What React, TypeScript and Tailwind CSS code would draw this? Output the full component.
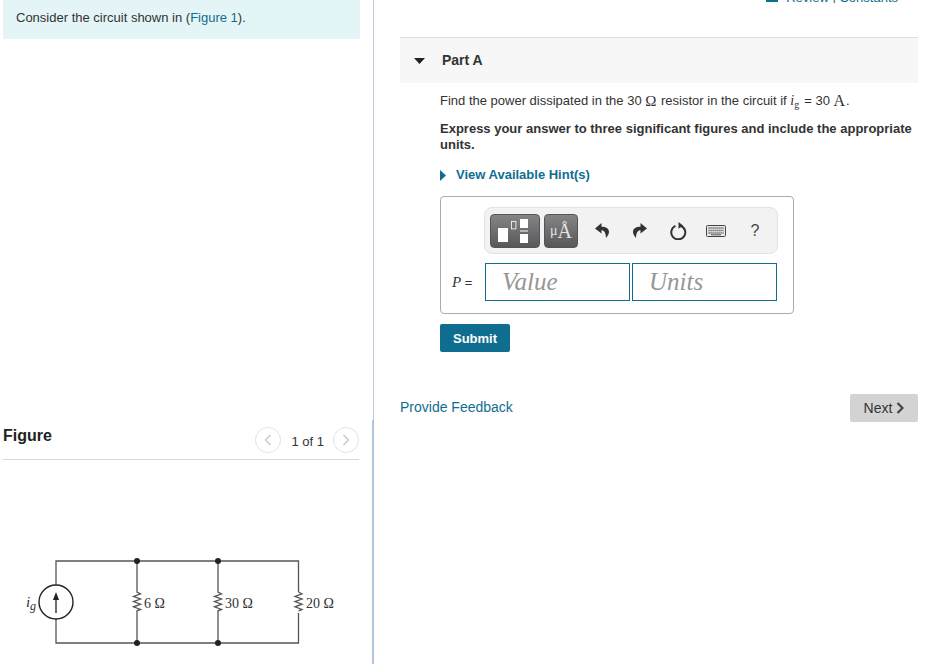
const sans = { fontFamily: '"Liberation Sans", Arial, sans-serif' };

function CircuitFigure() {
  const zig = (x: number) =>
    `M${x} 561V592l3.5 1.8-7 2.6 7 2.6-7 2.6 7 2.6-7 2.6 7 2.6-3.5 1.4V643`;
  return (
    <svg width="357" height="124" viewBox="3 540 357 124" className="block">
      <g fill="none" stroke="#555" strokeWidth="1.3">
        <path d="M56 585V561H298.5V592" />
        <path d="M56 619V643H298.5V613" />
        <path d={zig(137)} />
        <path d={zig(218)} />
        <path d="M298.5 592l3.5 1.8-7 2.6 7 2.6-7 2.6 7 2.6-7 2.6 7 2.6-3.5 1.4" />
        <circle cx="56" cy="602" r="17" stroke="#222" strokeWidth="1.4" />
        <path d="M56 613V597" stroke="#222" />
      </g>
      <path d="M56 592l-3 8h6z" fill="#222" />
      <g fill="#222">
        <circle cx="137" cy="561" r="3" />
        <circle cx="218" cy="561" r="3" />
        <circle cx="137" cy="643" r="3" />
        <circle cx="218" cy="643" r="3" />
      </g>
      <g fill="#333" fontSize="14" fontFamily='"Liberation Serif", serif'>
        <text x="26" y="607" fontStyle="italic" fontSize="15">i</text>
        <text x="30" y="610" fontStyle="italic" fontSize="12">g</text>
        <text x="144" y="608">6 Ω</text>
        <text x="225" y="608">30 Ω</text>
        <text x="306" y="608">20 Ω</text>
      </g>
    </svg>
  );
}

function PagerButton({ dir }: { dir: "left" | "right" }) {
  return (
    <span className="flex h-[26px] w-[26px] items-center justify-center rounded-full border border-[#e3e3e3] bg-white">
      <svg width="10" height="12" viewBox="0 0 10 12" fill="none" stroke="#c4c4c4" strokeWidth="1.2">
        <path d={dir === "left" ? "M7.500 1L2.500 6l5 5" : "M2.500 1l5 5-5 5"} />
      </svg>
    </span>
  );
}

function ToolIcon({ children }: { children: React.ReactNode }) {
  return <span className="flex h-[34px] w-[38px] items-center justify-center">{children}</span>;
}

function Toolbar() {
  return (
    <div className="ml-[43px] flex h-[47px] w-[294px] items-center rounded-[8px] border border-[#e2e2e2] bg-[#f2f2f2] pl-[5px]">
      <span className="flex h-[34px] w-[50px] items-center justify-center rounded-[4px] border border-[#555] bg-gradient-to-b from-[#858588] to-[#58585b] pr-[4px]">
        <svg width="30" height="24" viewBox="0 0 30 24" fill="#fff">
          <rect x="0" y="9" width="10" height="14" />
          <rect x="13.400" y="2.400" width="4.500" height="7.500" fill="none" stroke="#fff" strokeWidth="0.8" />
          <rect x="22" y="0" width="8" height="9" />
          <rect x="22" y="11.500" width="8" height="1" />
          <rect x="22" y="15" width="8" height="9" />
        </svg>
      </span>
      <span
        className="ml-[4px] flex h-[34px] w-[34px] items-center justify-center rounded-[4px] border border-[#555] bg-gradient-to-b from-[#858588] to-[#58585b] leading-none text-[#e4e4e4]"
        style={{ fontFamily: '"Liberation Serif", serif' }}
      >
        <span className="text-[14px]">μ</span>
        <span className="text-[20px]">Å</span>
      </span>
      <span className="ml-[5px] flex">
        <ToolIcon>
          <svg width="14" height="15" viewBox="0 0 14 15" fill="#333">
            <path d="M6.500 0L0 5.500 6.500 10.500V7.300C9 7.300 10.800 9.500 11 15 13 12.800 14 11 14 8.800 14 5.500 11 3.700 6.500 3.700z" />
          </svg>
        </ToolIcon>
        <ToolIcon>
          <svg width="14" height="15" viewBox="0 0 14 15" fill="#333">
            <path d="M7.500 0L14 5.500 7.500 10.500V7.300C5 7.300 3.200 9.500 3 15 1 12.800 0 11 0 8.800 0 5.500 3 3.700 7.500 3.700z" />
          </svg>
        </ToolIcon>
        <ToolIcon>
          <svg width="17" height="18" viewBox="0 0 17 18" fill="none" stroke="#333" strokeWidth="2">
            <path d="M10.500 3.700A7 7 0 1 1 5.500 3.900" />
            <path d="M8.500 0l4.500 3.500-4.500 3.200z" fill="#333" stroke="none" />
          </svg>
        </ToolIcon>
        <ToolIcon>
          <svg width="20" height="12" viewBox="0 0 20 12" fill="none">
            <rect x="0.500" y="0.500" width="19" height="11" rx="1" fill="#e8e8e8" stroke="#444" />
            <path d="M2.500 3h15M2.500 5.500h15" stroke="#555" strokeWidth="1.300" strokeDasharray="1.200 0.800" />
            <path d="M2.500 8h15" stroke="#555" strokeWidth="1.300" strokeDasharray="1.200 0.800" />
            <path d="M5 9.800h10" stroke="#555" />
          </svg>
        </ToolIcon>
        <span className="flex h-[34px] w-[40px] items-center justify-center text-[16px] text-[#444]" style={sans}>
          ?
        </span>
      </span>
    </div>
  );
}

function AnswerInput({ label }: { label: string }) {
  return (
    <div
      className="flex h-[38px] w-[145px] items-center border border-[#0f6e8f] bg-white pl-[16px] text-[25px] italic text-[#969696]"
      style={{ fontFamily: '"Liberation Serif", serif' }}
    >
      {label}
    </div>
  );
}

function Serif({ children, size = "text-[15px]" }: { children: React.ReactNode; size?: string }) {
  return (
    <span className={size} style={{ fontFamily: '"Liberation Serif", serif' }}>
      {children}
    </span>
  );
}

export default function App() {
  return (
    <div className="flex h-[664px] w-[938px] overflow-hidden bg-white text-[#333]" style={sans}>
      {/* left: statement + figure */}
      <div className="flex w-[374px] shrink-0 flex-col">
        <div className="h-[420px] border-r border-[#bccbe0] pl-[3px] pr-[13px]">
          <div className="flex h-[39px] items-center bg-[#e3f5f6] pb-[3px] pl-[13px] text-[13px]">
            Consider the circuit shown in (<span className="text-[#0f6e8f]">Figure 1</span>).
          </div>
        </div>
        <div className="flex-1 border-r-2 border-[#b0c4de] pl-[3px] pr-[13px]">
          <div className="flex h-[40px] items-center justify-between border-b border-[#d4d9de]">
            <h2 className="pb-[8px] text-[16px] font-bold text-[#222]">Figure</h2>
            <div className="flex items-center text-[13px]">
              <PagerButton dir="left" />
              <span className="ml-[10px] mr-[9px] pt-[4px]">1 of 1</span>
              <PagerButton dir="right" />
            </div>
          </div>
          <div className="mt-[80px]">
            <CircuitFigure />
          </div>
        </div>
      </div>

      {/* right: question */}
      <div className="min-w-0 flex-1 pl-[26px] pr-[20px]">
        <div className="flex h-[3px] items-end justify-end overflow-hidden pr-[20px] text-[13px] leading-[11px] text-[#0f6e8f]">
          <span className="mb-[1px] mr-[8px] inline-block h-[2px] w-[12px] shrink-0 bg-[#0f6e8f]" />
          <span>Review | Constants</span>
        </div>
        <div className="mt-[34px] flex h-[46px] items-center border-t border-[#ddd] bg-[#f7f7f7] pl-[14px]">
          <svg width="11" height="6" viewBox="0 0 11 6" fill="#222">
            <path d="M0 0h11L5.500 6z" />
          </svg>
          <h3 className="ml-[17px] text-[14px] font-bold text-[#333]">Part A</h3>
        </div>
        <div className="pl-[40px]">
          <p className="mt-[10px] flex h-[16px] items-center whitespace-pre text-[13px] leading-[16px]">
            Find the power dissipated in the 30 <Serif>Ω</Serif>
            <span className="ml-[1px]"> resistor in the circuit if </span>
            <Serif size="text-[14px]">
              <i>i</i>
              <sub className="text-[10px]">g</sub>
            </Serif>
            <span className="ml-[5px]">= 30 </span>
            <Serif size="text-[16px]">A</Serif>
            <span className="ml-[1px]">.</span>
          </p>
          <p className="mt-[12px] text-[13px] font-bold leading-[16px]">
            Express your answer to three significant figures and include the appropriate units.
          </p>
          <div className="mt-[14px] flex h-[16px] items-center text-[13px] font-bold text-[#0f6e8f]">
            <svg width="6" height="11" viewBox="0 0 6 11" fill="#0f6e8f">
              <path d="M0 0l6 5.500L0 11z" />
            </svg>
            <span className="ml-[10px]">View Available Hint(s)</span>
          </div>

          <div className="mt-[13px] h-[118px] w-[354px] rounded-[4px] border border-[#aaa] pt-[10px]">
            <Toolbar />
            <div className="mt-[9px] flex items-center">
              <span className="ml-[11px] w-[33px] text-[13px]">
                <i style={{ fontFamily: '"Liberation Serif", serif', fontSize: 15 }}>P</i> =
              </span>
              <AnswerInput label="Value" />
              <span className="ml-[2px]">
                <AnswerInput label="Units" />
              </span>
            </div>
          </div>

          <button className="mt-[10px] h-[28px] w-[70px] rounded-[2px] bg-[#0f6e8f] pt-[1px] text-[13px] font-bold text-white">
            Submit
          </button>
        </div>

        <div className="mt-[42px] flex items-center justify-between">
          <span className="pb-[2px] text-[14px] text-[#0f6e8f]">Provide Feedback</span>
          <button className="flex h-[28px] w-[68px] items-center justify-center rounded-[2px] bg-[#d3d3d3] text-[14px] text-[#333]">
            Next
            <svg className="ml-[4px]" width="8" height="12" viewBox="0 0 8 12" fill="none" stroke="#444" strokeWidth="2.200">
              <path d="M1.500 1l5 5-5 5" />
            </svg>
          </button>
        </div>
      </div>
    </div>
  );
}
